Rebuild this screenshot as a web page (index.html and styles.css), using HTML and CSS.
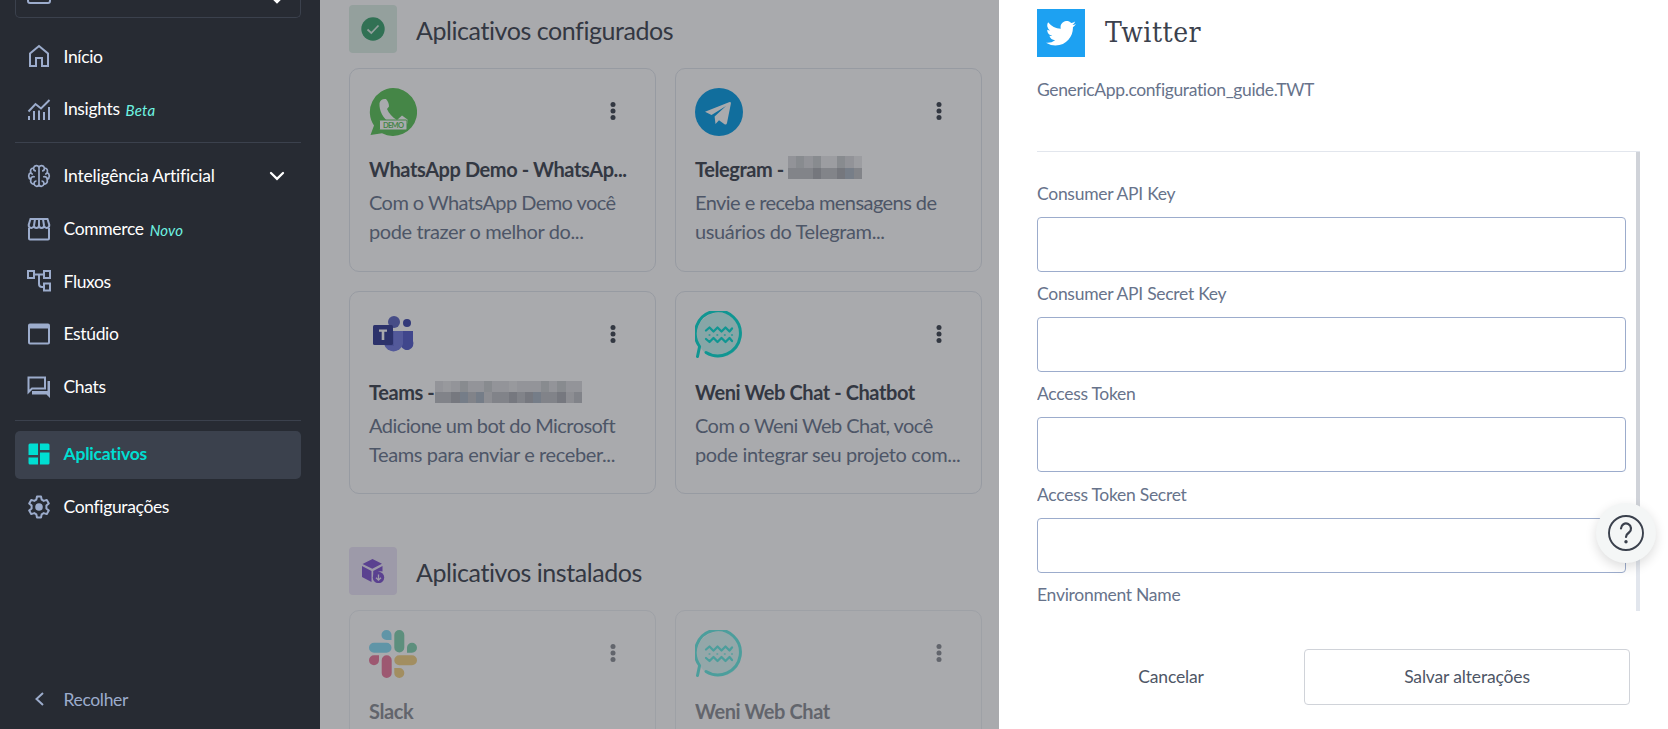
FILE: index.html
```html
<!DOCTYPE html>
<html lang="pt-BR">
<head>
<meta charset="utf-8">
<title>Aplicativos</title>
<link rel="stylesheet" href="styles.css">
</head>
<body>
<svg class="defs" width="0" height="0" aria-hidden="true">
  <symbol id="dots" viewBox="0 0 6 20"><circle cx="3" cy="3.4" r="2.5"/><circle cx="3" cy="10" r="2.5"/><circle cx="3" cy="16.6" r="2.5"/></symbol>
  <symbol id="weni" viewBox="0 0 48 48">
    <circle cx="24" cy="24" r="22.5" fill="#00ded2" fill-opacity=".22"/>
    <g fill="none" stroke="#00ded2" stroke-linecap="round" stroke-linejoin="round">
      <path stroke-width="3" d="M11 41.500A22.500 22.500 0 1 0 4.600 35.500L2.500 45.500"/>
      <path stroke-width="2.300" d="M11 19.500l3.500-3 4 4 4-4 4 4 4-4 4 4 2.500-3M11 28l3.500 3 4-4 4 4 4-4 4 4 4-4 2.500 3"/>
      <path stroke-width="2.200" stroke-opacity=".7" d="M14.500 24h.01M22.300 24h.01M29.800 24h.01M37 24h.01"/>
    </g>
  </symbol>
</svg>
<div class="app">
  <nav class="sidebar">
    <div class="project">
      <svg width="24" height="24" viewBox="0 0 24 24" fill="none" stroke="#9caccc" stroke-width="2"><rect x="1" y="3" width="22" height="20" rx="2"/></svg>
      <svg width="16" height="10" viewBox="0 0 16 10" fill="none" stroke="#fff" stroke-width="2.500" stroke-linecap="round"><path d="M2 2l6 6 6-6"/></svg>
    </div>
    <div class="item"><svg class="ico line" viewBox="0 0 24 24"><path d="M3 22V9.500l9-7.500 9 7.500V22h-6v-8H9v8z"/></svg><span>Início</span></div>
    <div class="item"><svg class="ico line" viewBox="0 0 24 24"><path d="M1.500 14.500l7-7.500 5.500 4.500 8.500-8.500M2 19v4M7 14v9M12 13.500v9.500M17 15v8M22 10v13"/></svg><span>Insights</span><em>Beta</em></div>
    <hr>
    <div class="item"><svg class="ico line thin" viewBox="0 0 24 24"><path d="M12 3.500C11 1 7.500 1 6.500 4 4 4 3 6 3.800 8.500 1 10 1 14 3.800 15.500 3 18.500 5 20.500 7 20c1 3 4.500 3 5 .5zM12 3.500c1-2.500 4.500-2.500 5.500.5 2.500 0 3.500 2 2.700 4.500 2.800 1.500 2.800 5.500 0 7 .8 3-1.200 5-3.200 4.500-1 3-4.500 3-5 .5M6.500 4c0 2 .5 3 2.500 3M3.800 15.500c0-2.500 2-3.500 4-2.500M17.500 4c0 2-.5 3-2.500 3M20.200 15.500c0-2.500-2-3.500-4-2.500M7 20c0-2 1-3 2.500-3M17 20c0-2-1-3-2.500-3M3.800 8.500c.4 1 1 1.600 2 1.800M20.200 8.500c-.4 1-1 1.600-2 1.800"/></svg><span class="wide">Inteligência Artificial</span>
      <svg class="chev" width="16" height="10" viewBox="0 0 16 10" fill="none" stroke="#fff" stroke-width="2.300" stroke-linecap="round"><path d="M2 2l6 5.800L14 2"/></svg></div>
    <div class="item"><svg class="ico line" viewBox="0 0 24 24"><path d="M2 11v10.500q0 1 1 1h18q1 0 1-1V11M3.500 2h17l1.800 6c0 3.800-5.200 3.800-5.200.5 0 3.300-5.100 3.300-5.100 0 0 3.300-5.100 3.300-5.100 0 0 3.300-5.200 3.300-5.200-.5zM8 2l-1 6.500M12 2v6.500M16 2l1 6.500"/></svg><span>Commerce</span><em>Novo</em></div>
    <div class="item"><svg class="ico line" viewBox="0 0 24 24"><path d="M1 2h6v7H1zM17 2h6v7h-6zM17 14.500h6v7h-6zM7 5.500h10M12 5.500V15q0 3 3 3h2"/></svg><span>Fluxos</span></div>
    <div class="item"><svg class="ico line" viewBox="0 0 24 24"><rect x="2" y="2.500" width="20" height="19" rx="1"/><path stroke-width="4" d="M2 4.500h20"/></svg><span>Estúdio</span></div>
    <div class="item"><svg class="ico line" viewBox="0 0 24 24"><path d="M1.500 2.500H18v11H5L1.500 17z"/><path fill="#9caccc" stroke="none" d="M20.500 6H23v17l-3.500-3.500H5V16h15.500z"/></svg><span>Chats</span></div>
    <hr>
    <div class="item active"><svg class="ico" viewBox="0 0 24 24" fill="#00ded2"><path d="M3 1.500h8v11.500H1.500V3Q1.500 1.500 3 1.500zM13 1.500h8q1.500 0 1.500 1.500v5H13zM13 10.500h9.500V21q0 1.500-1.500 1.500h-8zM1.500 15.500H11v7H3q-1.500 0-1.500-1.500z"/></svg><span class="wide">Aplicativos</span></div>
    <div class="item"><svg class="ico line" viewBox="0 0 24 24"><path stroke-linejoin="round" d="M10 1.500h4l.7 3.200 2 1.200 3.100-1 2 3.500-2.400 2.200v2.800l2.400 2.200-2 3.500-3.100-1-2 1.200-.7 3.200h-4l-.7-3.200-2-1.200-3.100 1-2-3.500 2.400-2.200v-2.800L2.200 8.400l2-3.500 3.100 1 2-1.200z"/><circle cx="12" cy="12" r="3.800" fill="#9caccc" stroke="none"/></svg><span>Configurações</span></div>
    <div class="item collapse"><svg class="ico" viewBox="0 0 24 24" fill="none" stroke="#9caccc" stroke-width="2"><path d="M16 6l-6.500 6 6.500 6"/></svg><span>Recolher</span></div>
  </nav>

  <main class="content">
    <header class="section">
      <div class="badge green"><svg width="24" height="24" viewBox="0 0 24 24"><circle cx="12" cy="12" r="11.700" fill="#37a06c"/><path d="M6.500 12.500l3.800 3.500 7.200-7.500" fill="none" stroke="#dceee5" stroke-width="1.700"/></svg></div>
      <h2>Aplicativos configurados</h2>
    </header>
    <div class="grid">
      <article class="card">
        <div class="top"><svg width="48" height="48" viewBox="0 0 48 48"><path fill="#59c356" d="M24 0a24 24 0 1 1-11 45.300L1.500 47l3.500-9.500A24 24 0 0 1 24 0z"/><path fill="#fff" d="M10.500 15c1-3 3-4.500 6.500-4 2 2 3 4.800 3 7.500l-2 2.500c2 4.500 5 8 10 11l5-4.500 5.500 4v4H21C14 30 10 23 10.500 15z"/><rect x="10.500" y="32" width="27.500" height="10" rx="1" fill="#fff" stroke="#59c356"/><text x="14" y="40" font-size="7.500" textLength="21" font-weight="700" fill="#59c356">DEMO</text></svg><svg class="dots"><use href="#dots"/></svg></div>
        <h3>WhatsApp Demo - WhatsAp...</h3>
        <p>Com o WhatsApp Demo você<br>pode trazer o melhor do...</p>
      </article>
      <article class="card">
        <div class="top"><svg width="48" height="48" viewBox="0 0 48 48"><circle cx="24" cy="24" r="24" fill="#039be5"/><path fill="#fff" d="M10 23.800L34 14.200q2.200-.5 1.900 1.300L32 35q-.6 2.200-2.500 1.200l-5.500-4-3.500 3.800-.9-7.500L31 18 16.500 27z"/></svg><svg class="dots"><use href="#dots"/></svg></div>
        <h3>Telegram - <svg class="mask" width="74" height="23" viewBox="0 0 74 23" preserveAspectRatio="none" shape-rendering="crispEdges"><path fill="#d9d9dc" d="M0 0h74v23H0z"/><path fill="#e9e9eb" d="M33 0h16v12H33zM66 0h8v12h-8z"/><path fill="#c8cbce" d="M8 0h8v12H8zM25 0h8v12h-8zM49 0h8v12h-8z"/><path fill="#bfc0c4" d="M0 12h74v11H0z"/><path fill="#a9abb0" d="M25 12h8v11h-8zM49 12h8v11h-8z"/><path fill="#acb6c2" d="M57 12h9v11h-9z"/></svg></h3>
        <p>Envie e receba mensagens de<br>usuários do Telegram...</p>
      </article>
      <article class="card">
        <div class="top"><svg width="48" height="48" viewBox="0 0 48 48"><circle cx="38" cy="12" r="4" fill="#3a44a8"/><path fill="#5059c9" d="M32 20h12v10a6 6 0 0 1-12 5z"/><circle cx="25" cy="11" r="6" fill="#5c64c0"/><path fill="#7079e0" d="M15 20h19v13a9.800 9.800 0 0 1-19 0z"/><path fill="#5a62cc" d="M24 20h1v15h-9V20z" opacity=".6"/><rect x="4" y="14" width="20" height="20" rx="1.500" fill="#303891"/><path fill="#fff" d="M10 18.500h8v2.200h-2.700V29h-2.600v-8.300H10z"/></svg><svg class="dots"><use href="#dots"/></svg></div>
        <h3>Teams -<svg class="mask tight" width="147" height="22" viewBox="0 0 147 22" preserveAspectRatio="none" shape-rendering="crispEdges"><path fill="#dadbde" d="M0 0h147v22H0z"/><path fill="#c9cbce" d="M25 0h8v11h-8zM49 0h8v11h-8zM106 0h8v11h-8zM122 0h9v11h-9z"/><path fill="#e3e3e4" d="M8 0h8v11H8zM74 0h8v11h-8z"/><path fill="#bcbfc4" d="M0 11h147v11H0z"/><path fill="#abacb2" d="M16 11h9v11h-9zM74 11h8v11h-8zM90 11h8v11h-8zM122 11h9v11h-9z"/><path fill="#a9b5c1" d="M25 11h8v11h-8zM41 11h8v11h-8zM98 11h8v11h-8z"/><path fill="#d0d1d4" d="M49 11h8v11h-8zM131 11h8v11h-8z"/></svg></h3>
        <p>Adicione um bot do Microsoft<br>Teams para enviar e receber...</p>
      </article>
      <article class="card">
        <div class="top"><svg width="48" height="48"><use href="#weni"/></svg><svg class="dots"><use href="#dots"/></svg></div>
        <h3>Weni Web Chat - Chatbot</h3>
        <p>Com o Weni Web Chat, você<br>pode integrar seu projeto com...</p>
      </article>
    </div>
    <header class="section second">
      <div class="badge purple"><svg width="24" height="24" viewBox="0 0 24 24"><path fill="#7c51cf" d="M11.500 0L21 4.800l-9.700 5L1.500 5zM1 7l9.500 5v11L1 18zM21.500 7v5.500a7 7 0 0 0-8.500 7.500l-.8-.5V12z"/><circle cx="17.500" cy="18.500" r="5.700" fill="#7c51cf"/><path fill="none" stroke="#ece4f8" stroke-width="1.300" d="M17.500 15.500V21M15 18.800l2.500 2.400 2.500-2.400"/></svg></div>
      <h2>Aplicativos instalados</h2>
    </header>
    <div class="grid faded">
      <article class="card">
        <div class="top"><svg width="48" height="48" viewBox="0 0 48 48"><path fill="#36c5f0" d="M17.500 0a5 5 0 0 1 5 5v5h-5a5 5 0 0 1 0-10zM5 12.700h12.500a5 5 0 0 1 0 10H5a5 5 0 0 1 0-10z"/><path fill="#2eb67d" d="M25.300 5a5 5 0 0 1 10 0v12.500a5 5 0 0 1-10 0zM38 17.700a5 5 0 1 1 5 5h-5z"/><path fill="#ecb22e" d="M30.300 25.300H43a5 5 0 0 1 0 10H30.300a5 5 0 0 1 0-10zM25.300 38h5a5 5 0 1 1-5 5z"/><path fill="#e01e5a" d="M0 30.300a5 5 0 0 1 5-5h5v5a5 5 0 0 1-10 0zM12.700 30.300a5 5 0 0 1 10 0V43a5 5 0 0 1-10 0z"/></svg><svg class="dots"><use href="#dots"/></svg></div>
        <h3>Slack</h3>
      </article>
      <article class="card">
        <div class="top"><svg width="48" height="48"><use href="#weni"/></svg><svg class="dots"><use href="#dots"/></svg></div>
        <h3>Weni Web Chat</h3>
      </article>
    </div>
    <div class="overlay"></div>
  </main>

  <aside class="drawer">
    <header class="drawer-head">
      <div class="tw"><svg width="30" height="25" viewBox="0 0 24 20" fill="#fff"><path d="M24 2.370a9.600 9.600 0 0 1-2.830.78A4.940 4.940 0 0 0 23.340.420a9.900 9.900 0 0 1-3.130 1.200 4.920 4.920 0 0 0-8.390 4.490A13.980 13.980 0 0 1 1.670.960a4.930 4.930 0 0 0 1.520 6.570 4.900 4.900 0 0 1-2.230-.61v.06a4.930 4.930 0 0 0 3.950 4.830 4.900 4.900 0 0 1-2.220.08 4.930 4.930 0 0 0 4.600 3.420A9.870 9.870 0 0 1 0 17.350a13.940 13.940 0 0 0 7.550 2.210c9.050 0 14-7.500 14-14l-.02-.64A10 10 0 0 0 24 2.370z"/></svg></div>
      <h1>Twitter</h1>
    </header>
    <p class="guide">GenericApp.configuration_guide.TWT</p>
    <div class="scroll">
      <form class="fields">
        <label>Consumer API Key</label><input>
        <label>Consumer API Secret Key</label><input>
        <label>Access Token</label><input>
        <label>Access Token Secret</label><input>
        <label>Environment Name</label>
      </form>
      <div class="track"><div class="thumb"></div></div>
    </div>
    <footer class="actions"><button class="plain">Cancelar</button><button class="outlined">Salvar alterações</button></footer>
  </aside>
  <div class="help"><svg width="36" height="36" viewBox="0 0 36 36" fill="none" stroke="#3b414d" stroke-width="1.900" stroke-linecap="round"><circle cx="18" cy="18" r="17"/><path stroke-width="2.200" d="M13 13.500a5 5 0 1 1 8 4c-1.800 1.300-3 2.200-3 4.500"/><circle cx="18" cy="26.800" r="1.700" fill="#3b414d" stroke="none"/></svg></div>
</div>
</body>
</html>
```
FILE: styles.css
```css
* { box-sizing: border-box; }
body { margin: 0; font-family: Lato, sans-serif; font-size: 17.5px; overflow: hidden; }
h1, h2, h3, p { margin: 0; font-weight: 400; }
svg { display: block; flex: none; }
.defs { position: absolute; }
.app { display: flex; height: 729px; position: relative; overflow: hidden; }

.sidebar { width: 320px; background: #272b33; padding: 0 19px 5px 15px; display: flex; flex-direction: column; color: #fff; }
.project { height: 18px; flex: none; border: 1px solid #3b414d; border-top: 0; border-radius: 0 0 5px 5px; display: flex; justify-content: space-between; align-items: flex-end; padding: 0 15px 13px 11px; margin-bottom: 15px; overflow: hidden; }
.item { height: 48px; flex: none; display: flex; align-items: center; padding: 0 16px 2px 12px; margin-bottom: 4.700px; border-radius: 5px; letter-spacing: -.35px; }
.ico { width: 24px; height: 24px; margin-right: 12.500px; }
.line { fill: none; stroke: #9caccc; stroke-width: 2; }
.thin { stroke-width: 1.700; }
.wide { letter-spacing: -.2px; }
.item em { margin: 2px 0 0 6px; font-size: 15px; color: #6ff5e3; letter-spacing: .2px; }
.chev { margin-left: auto; }
hr { width: 100%; height: 1px; flex: none; border: 0; background: #3b414d; margin: 4px 0 9.500px; }
.active { background: #3b414d; color: #00ded2; font-weight: 700; }
.collapse { margin: auto 0 0; color: #9caccc; }

.content { width: 679px; position: relative; background: #fff; padding: 5px 17px 0 29px; overflow: hidden; color: #3b414d; }
.overlay { position: absolute; inset: 0; background: rgba(39, 43, 51, .4); }
.section { display: flex; align-items: center; gap: 19px; height: 48px; margin-bottom: 15px; }
.second { margin-top: 53px; }
.badge { width: 48px; height: 48px; border-radius: 4px; display: grid; place-items: center; }
.green { background: #dceee5; }
.purple { background: #ece4f8; }
h2 { font-size: 25px; line-height: 32px; padding-top: 1px; letter-spacing: -.43px; }
.grid { display: grid; grid-template-columns: 307px 307px; grid-template-rows: 204px 203px; gap: 19px; }
.card { border: 1px solid #e2e6ed; border-radius: 10px; padding: 19px; }
.top { display: flex; justify-content: space-between; align-items: center; padding-right: 20px; }
.dots { width: 6px; height: 20px; fill: #3b414d; margin-bottom: 2px; }
h3 { display: flex; font-size: 20px; font-weight: 700; line-height: 28px; margin-top: 19px; white-space: pre; letter-spacing: -.42px; }
.mask { margin-top: 1px; }
.tight { margin: 3px 0 0 1px; }
.card p { font-size: 20px; line-height: 28.500px; color: #67738b; margin-top: 5px; white-space: nowrap; letter-spacing: -.38px; }
.card p::first-line { letter-spacing: -.56px; }
.faded > .card { border-color: #edf0f4; }
.faded > .card > * { opacity: .6; }

.drawer { width: 669px; background: #fff; padding: 9px 28px 0 38px; }
.drawer-head { display: flex; align-items: center; gap: 20px; }
.tw { width: 48px; height: 48px; background: #1da1f2; display: grid; place-items: center; }
h1 { font-family: "DejaVu Serif Condensed", "DejaVu Serif", serif; font-size: 28px; line-height: 40px; color: #3b414d; letter-spacing: .5px; }
.guide { margin-top: 20px; line-height: 26px; color: #67738b; letter-spacing: -.36px; }
.scroll { margin-top: 48px; height: 460px; display: flex; border-top: 1px solid #e2e6ed; width: 603px; }
.fields { width: 599px; padding: 29px 10px 0 0; overflow: hidden; }
.fields label { display: block; height: 26px; line-height: 26px; color: #67738b; letter-spacing: -.28px; }
.fields input { display: block; width: 589px; height: 55px; margin: 10px 0 9.200px; border: 1px solid #9caccc; border-radius: 4px; background: #fff; }
.track { width: 4px; background: #e2e6ed; }
.thumb { height: 382px; background: #d0d3d9; }
.actions { display: flex; margin-top: 38px; padding: 0 0 0 1px; }
.actions button { height: 56px; font: inherit; color: #4e5666; background: none; letter-spacing: -.16px; padding: 0 0 2px; }
.plain { width: 266px; border: 0; }
.outlined { width: 326px; border: 1px solid #d0d3d9; border-radius: 4px; }
.help { position: absolute; left: 1596px; top: 503px; width: 60px; height: 60px; border-radius: 50%; background: #f4f6f6; box-shadow: 0 4px 12px rgba(0, 0, 0, .14); display: grid; place-items: center; }
```
